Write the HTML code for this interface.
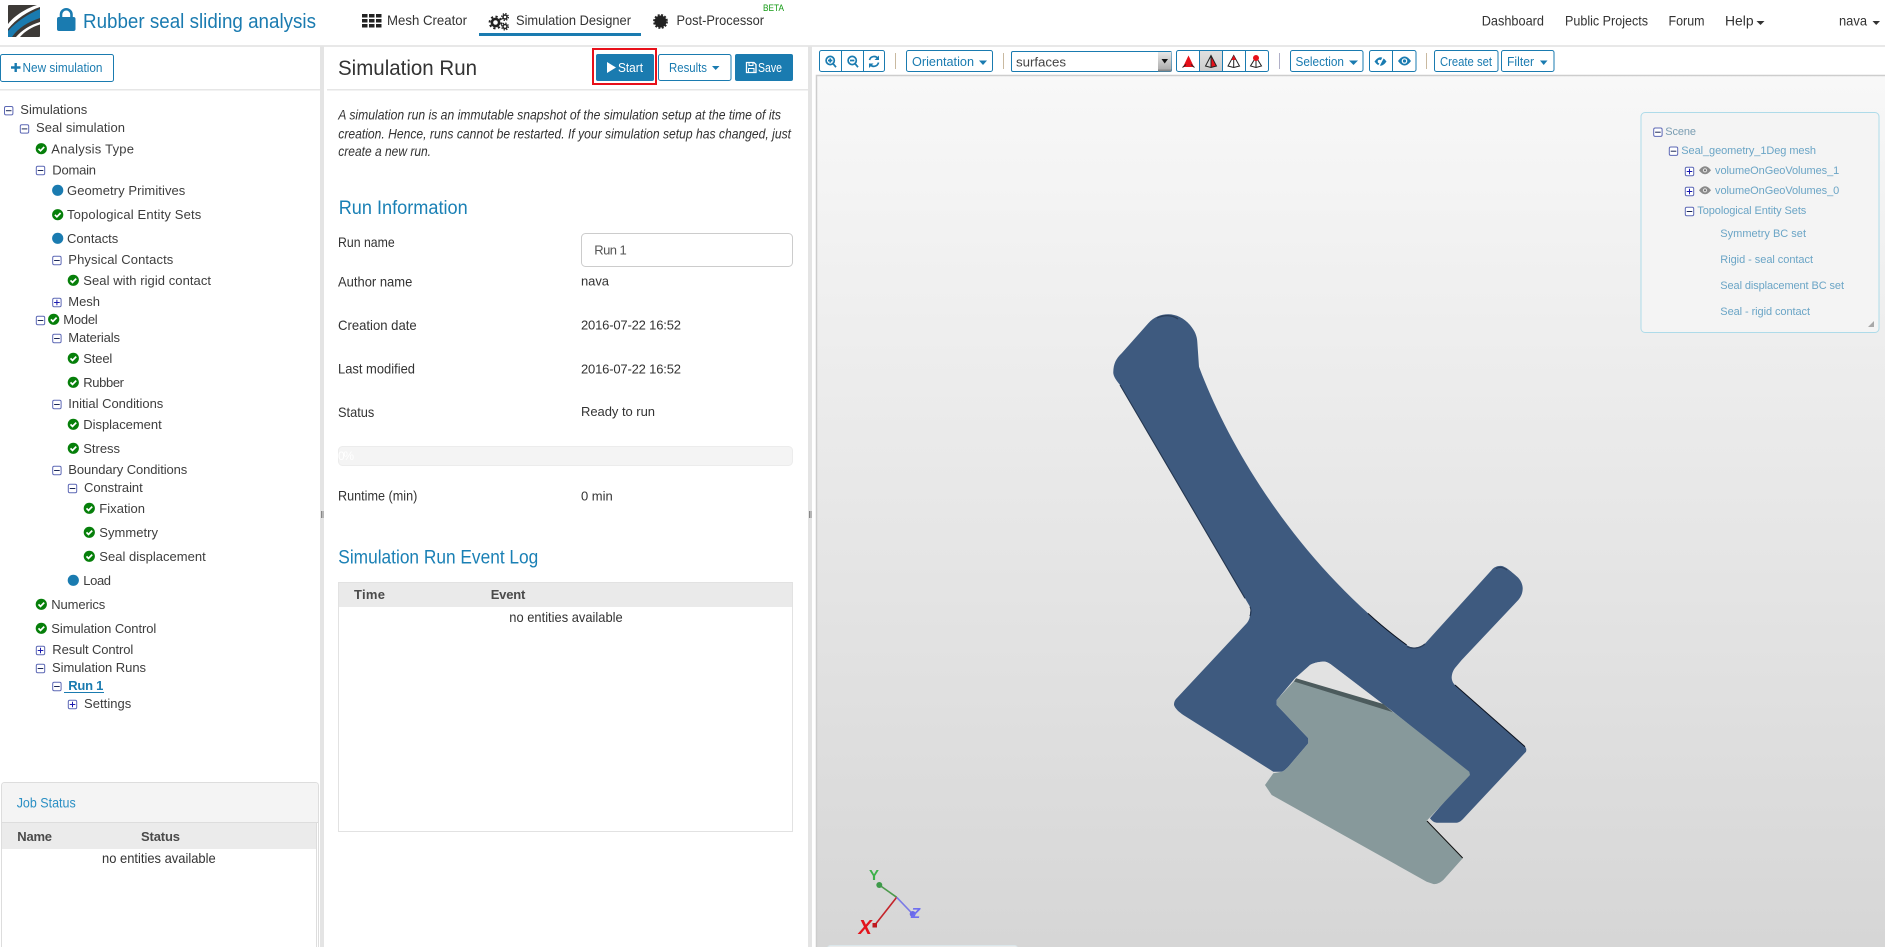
<!DOCTYPE html>
<html lang="en">
<head>
<meta charset="utf-8">
<title>Rubber seal sliding analysis</title>
<style>
html,body{margin:0;padding:0;background:#fff;width:1885px;height:947px;overflow:hidden}
svg{display:block}
text{font-family:"Liberation Sans",sans-serif;white-space:pre}
.t{font-size:13px;fill:#3d3d3d}
.l{font-size:14px;fill:#333}
.n{font-size:14px;fill:#333}
.b{font-size:12.5px;fill:#1a7bb0}
.w{font-size:12.5px;fill:#fff}
.h{font-size:19px;fill:#1a80b5}
.th{font-size:13px;font-weight:bold;fill:#4a4a4a}
.v{font-size:13px;fill:#333}
.s{font-size:11px;fill:#6ba5c6}
.btn{fill:#fff;stroke:#1a7bb0;stroke-width:1}
.div{stroke:#c9b9a0;stroke-width:1}
</style>
</head>
<body>
<svg width="1885" height="947" viewBox="0 0 1885 947" xmlns="http://www.w3.org/2000/svg">
<defs>
<linearGradient id="bg" x1="0" y1="0" x2="0" y2="1"><stop offset="0" stop-color="#f8f8f8"/><stop offset="1" stop-color="#d6d6d6"/></linearGradient>
<linearGradient id="dd" x1="0" y1="0" x2="0" y2="1"><stop offset="0" stop-color="#e8e8e8"/><stop offset="1" stop-color="#a8a8a8"/></linearGradient>
<linearGradient id="sel" x1="0" y1="0" x2="0" y2="1"><stop offset="0" stop-color="#e0e0e0"/><stop offset="1" stop-color="#cdcdcd"/></linearGradient>
<g id="mi"><rect x="-4" y="-4" width="8.4" height="8.4" rx="1.5" fill="#fff" stroke="#5d68b5"/><path d="M-2.6 0.2H3" stroke="#1c2858" stroke-width="1"/></g>
<g id="pl"><rect x="-4" y="-4" width="8.4" height="8.4" rx="1.5" fill="#fff" stroke="#5d68b5"/><path d="M-2.6 0.2H3M0.2 -2.6V3" stroke="#1b1bb0" stroke-width="1"/></g>
<g id="ck"><circle r="5.6" fill="#067f0a"/><path d="M-2.8 0.1L-0.8 2.1L2.9 -1.7" fill="none" stroke="#fff" stroke-width="1.7"/></g>
<circle id="dt" r="5.6" fill="#1a7bb0"/>
<g id="ey"><path d="M-6 0Q0 -8 6 0Q0 8 -6 0Z" fill="#8a8a8a"/><circle r="2.1" fill="#e6e6e6"/><circle r="1.1" fill="#6e6e6e"/></g>
</defs>

<!-- page chrome -->
<rect x="0" y="45" width="1885" height="2" fill="#e8e8e8"/>
<rect x="320" y="46" width="4" height="901" fill="#e4e4e4"/>
<rect x="808" y="46" width="4" height="901" fill="#e4e4e4"/>
<path d="M321.5 511V518M323 511V518M809.5 511V518M811 511V518" stroke="#888" stroke-width="1"/>
<rect x="0" y="89" width="320" height="1.5" fill="#e6e6e6"/>
<rect x="327" y="89" width="481" height="1.5" fill="#e6e6e6"/>

<!-- logo -->
<rect x="8" y="5" width="32" height="32" rx="1" fill="#3d3a37"/>
<path d="M8 24C15 15 27 8 37 5H40V7C28 11 16 19 8 29Z" fill="#fff"/>
<path d="M8 31C16 22 28 14 40 9V18C28 22 18 28 12 37H8Z" fill="#1a7bb0"/>
<path d="M16 37C22 30 30 25 40 22V24.5C32 27 25 31 20 37Z" fill="#fff"/>

<!-- lock & title -->
<path d="M61 18V14.5A5.2 5.2 0 0 1 71.5 14.5V18" fill="none" stroke="#1a7bb0" stroke-width="2.6"/>
<rect x="57" y="17" width="18.5" height="14" rx="2" fill="#1a7bb0"/>
<text x="83" y="28" textLength="233" lengthAdjust="spacingAndGlyphs" style="font-size:20px;fill:#1a7bb0">Rubber seal sliding analysis</text>

<!-- main nav -->
<g fill="#222">
<rect x="362" y="14" width="5.5" height="3.5"/><rect x="369" y="14" width="5.5" height="3.5"/><rect x="376" y="14" width="5.5" height="3.5"/>
<rect x="362" y="19" width="5.5" height="3.5"/><rect x="369" y="19" width="5.5" height="3.5"/><rect x="376" y="19" width="5.5" height="3.5"/>
<rect x="362" y="24" width="5.5" height="3.5"/><rect x="369" y="24" width="5.5" height="3.5"/><rect x="376" y="24" width="5.5" height="3.5"/>
</g>
<text class="n" x="387" y="25" textLength="80" lengthAdjust="spacingAndGlyphs">Mesh Creator</text>
<g fill="none" stroke="#222">
<circle cx="495.5" cy="22.5" r="3.6" stroke-width="2.6"/><circle cx="495.5" cy="22.5" r="5.9" stroke-width="2" stroke-dasharray="2.2 2.4"/>
<circle cx="505" cy="17" r="2" stroke-width="1.5"/><circle cx="505" cy="17" r="3.4" stroke-width="1.2" stroke-dasharray="1.4 1.3"/>
<circle cx="505" cy="26.5" r="2" stroke-width="1.5"/><circle cx="505" cy="26.5" r="3.4" stroke-width="1.2" stroke-dasharray="1.4 1.3"/>
</g>
<text class="n" x="516" y="25" textLength="115" lengthAdjust="spacingAndGlyphs">Simulation Designer</text>
<rect x="479" y="33" width="162" height="3" fill="#1a7bb0"/>
<circle cx="660.5" cy="21.5" r="6" fill="#222"/><circle cx="660.5" cy="21.5" r="6.6" fill="none" stroke="#222" stroke-width="1.6" stroke-dasharray="2 1.5"/>
<text class="n" x="676.5" y="25" textLength="87.5" lengthAdjust="spacingAndGlyphs">Post-Processor</text>
<text x="763" y="11" textLength="21" lengthAdjust="spacingAndGlyphs" style="font-size:9px;fill:#139a13">BETA</text>

<!-- right nav -->
<text class="n" x="1481.7" y="25.5" textLength="62.3" lengthAdjust="spacingAndGlyphs">Dashboard</text>
<text class="n" x="1565" y="25.5" textLength="83" lengthAdjust="spacingAndGlyphs">Public Projects</text>
<text class="n" x="1668.5" y="25.5" textLength="36" lengthAdjust="spacingAndGlyphs">Forum</text>
<text class="n" x="1725" y="25.5" textLength="28.6" lengthAdjust="spacingAndGlyphs">Help</text>
<path d="M1756.5 21H1764.5L1760.5 25Z" fill="#333"/>
<text class="n" x="1839" y="25.5" textLength="28" lengthAdjust="spacingAndGlyphs">nava</text>
<path d="M1872.5 21H1880L1876.2 25Z" fill="#333"/>

<!-- left panel -->
<rect class="btn" x="0.5" y="54.5" width="113" height="27" rx="2"/>
<path d="M11 67.5H20.5M15.7 63V72" stroke="#1a7bb0" stroke-width="2.4"/>
<text class="b" x="22.5" y="72" textLength="80" lengthAdjust="spacingAndGlyphs">New simulation</text>

<!-- tree -->
<use href="#mi" x="8.5" y="110.5"/><text class="t" x="20.3" y="114" textLength="67">Simulations</text>
<use href="#mi" x="24.3" y="128.7"/><text class="t" x="36" y="132" textLength="89">Seal simulation</text>
<use href="#ck" x="41.3" y="148.7"/><text class="t" x="51.3" y="153.3" textLength="82.7">Analysis Type</text>
<use href="#mi" x="40.3" y="170.3"/><text class="t" x="52.3" y="174.3" textLength="43.7">Domain</text>
<use href="#dt" x="57.7" y="190.3"/><text class="t" x="67" y="195" textLength="118.3">Geometry Primitives</text>
<use href="#ck" x="57.7" y="214.7"/><text class="t" x="67" y="219" textLength="134.3">Topological Entity Sets</text>
<use href="#dt" x="57.7" y="238.3"/><text class="t" x="67" y="243" textLength="51.3">Contacts</text>
<use href="#mi" x="56.7" y="260.3"/><text class="t" x="68.3" y="264" textLength="105">Physical Contacts</text>
<use href="#ck" x="73.3" y="280.3"/><text class="t" x="83.3" y="285" textLength="127.7">Seal with rigid contact</text>
<use href="#pl" x="56.7" y="302.3"/><text class="t" x="68.3" y="306" textLength="31.7">Mesh</text>
<use href="#mi" x="40.3" y="320.3"/><use href="#ck" x="53.7" y="319.3"/><text class="t" x="63.3" y="324" textLength="34.4">Model</text>
<use href="#mi" x="56.7" y="338.3"/><text class="t" x="68.3" y="342" textLength="51.7">Materials</text>
<use href="#ck" x="73.3" y="358.3"/><text class="t" x="83.3" y="363" textLength="29">Steel</text>
<use href="#ck" x="73.3" y="382.3"/><text class="t" x="83.3" y="387" textLength="40.7">Rubber</text>
<use href="#mi" x="56.7" y="404.3"/><text class="t" x="68.3" y="408" textLength="95">Initial Conditions</text>
<use href="#ck" x="73.3" y="424.3"/><text class="t" x="83.3" y="429" textLength="78.4">Displacement</text>
<use href="#ck" x="73.3" y="448.3"/><text class="t" x="83.3" y="453" textLength="36.7">Stress</text>
<use href="#mi" x="56.7" y="470.3"/><text class="t" x="68.3" y="474" textLength="119">Boundary Conditions</text>
<use href="#mi" x="72.3" y="488.3"/><text class="t" x="84" y="492" textLength="58.7">Constraint</text>
<use href="#ck" x="89.3" y="508.3"/><text class="t" x="99.3" y="513" textLength="45.7">Fixation</text>
<use href="#ck" x="89.3" y="532.3"/><text class="t" x="99.3" y="537" textLength="58.7">Symmetry</text>
<use href="#ck" x="89.3" y="556.3"/><text class="t" x="99.3" y="561" textLength="106.4">Seal displacement</text>
<use href="#dt" x="73.3" y="580.3"/><text class="t" x="83.3" y="585" textLength="27.7">Load</text>
<use href="#ck" x="41.3" y="604.3"/><text class="t" x="51.3" y="609" textLength="54">Numerics</text>
<use href="#ck" x="41.3" y="628.3"/><text class="t" x="51.3" y="633" textLength="105">Simulation Control</text>
<use href="#pl" x="40.3" y="650.3"/><text class="t" x="52.3" y="654" textLength="81">Result Control</text>
<use href="#mi" x="40.3" y="668.3"/><text class="t" x="52" y="672" textLength="94">Simulation Runs</text>
<use href="#mi" x="56.7" y="686.3"/><text x="68.3" y="690" textLength="35" style="font-size:13px;font-weight:bold;fill:#1a7bb0">Run 1</text>
<rect x="64" y="692" width="40" height="1" fill="#1a7bb0"/>
<use href="#pl" x="72.3" y="704.3"/><text class="t" x="84" y="708" textLength="47.3">Settings</text>

<!-- job status -->
<rect x="1.5" y="782.5" width="317" height="170" rx="3" fill="#fff" stroke="#ddd"/>
<path d="M2 822V785.5A3 3 0 0 1 5 783H315A3 3 0 0 1 318 785.5V822Z" fill="#f4f4f4"/>
<rect x="1" y="822" width="318" height="1" fill="#ddd"/>
<text x="16.7" y="807.7" textLength="59" lengthAdjust="spacingAndGlyphs" style="font-size:14px;fill:#2a8fc4">Job Status</text>
<rect x="2" y="823" width="314" height="26" fill="#ebebeb"/>
<rect x="316" y="823" width="1" height="124" fill="#ddd"/>
<text class="th" x="17.3" y="841" textLength="34.7">Name</text>
<text class="th" x="141" y="841" textLength="39">Status</text>
<text class="l" x="102" y="863" textLength="113.7" lengthAdjust="spacingAndGlyphs">no entities available</text>

<!-- center panel -->
<text x="338" y="75" textLength="139" lengthAdjust="spacingAndGlyphs" style="font-size:21px;fill:#333">Simulation Run</text>
<rect x="593" y="49" width="63" height="35" fill="none" stroke="#e8101a" stroke-width="2"/>
<rect x="596" y="54" width="58" height="27" rx="2" fill="#1a7bb0"/>
<path d="M607 62L616 67.5L607 73Z" fill="#fff"/>
<text class="w" x="618" y="72" textLength="25" lengthAdjust="spacingAndGlyphs">Start</text>
<rect class="btn" x="658.5" y="54.5" width="72.5" height="26" rx="2"/>
<text class="b" x="669" y="72" textLength="38" lengthAdjust="spacingAndGlyphs">Results</text>
<path d="M712 66H719.5L715.7 70Z" fill="#1a7bb0"/>
<rect x="735" y="54" width="58" height="27" rx="2" fill="#1a7bb0"/>
<path d="M746.5 62.5H754L756 64.5V72.5H746.5Z" fill="none" stroke="#fff" stroke-width="1.3"/><path d="M749 62.5V65.5H753V62.5M748.5 72V68.5H754V72" fill="none" stroke="#fff"/>
<text class="w" x="758" y="72" textLength="24" lengthAdjust="spacingAndGlyphs">Save</text>

<g style="font-size:14px;font-style:italic;fill:#333">
<text x="338.3" y="119.3" textLength="442.7" lengthAdjust="spacingAndGlyphs">A simulation run is an immutable snapshot of the simulation setup at the time of its</text>
<text x="338.3" y="138.3" textLength="452.7" lengthAdjust="spacingAndGlyphs">creation. Hence, runs cannot be restarted. If your simulation setup has changed, just</text>
<text x="338.3" y="156" textLength="92.7" lengthAdjust="spacingAndGlyphs">create a new run.</text>
</g>

<text class="h" x="338.7" y="214" textLength="129" lengthAdjust="spacingAndGlyphs">Run Information</text>

<text class="l" x="338" y="247" textLength="56.7" lengthAdjust="spacingAndGlyphs">Run name</text>
<rect x="581.5" y="233.5" width="211" height="33" rx="4" fill="#fff" stroke="#ccc"/>
<text x="594.3" y="254.3" textLength="32.4" style="font-size:13px;fill:#555">Run 1</text>
<text class="l" x="338" y="286.3" textLength="74.3" lengthAdjust="spacingAndGlyphs">Author name</text>
<text class="v" x="581" y="285.3" textLength="28">nava</text>
<text class="l" x="338" y="330" textLength="78.7" lengthAdjust="spacingAndGlyphs">Creation date</text>
<text class="v" x="581" y="329.3" textLength="100">2016-07-22 16:52</text>
<text class="l" x="338" y="373.3" textLength="77" lengthAdjust="spacingAndGlyphs">Last modified</text>
<text class="v" x="581" y="373.3" textLength="100">2016-07-22 16:52</text>
<text class="l" x="338" y="417" textLength="36.3" lengthAdjust="spacingAndGlyphs">Status</text>
<text class="v" x="581" y="416" textLength="74">Ready to run</text>
<rect x="338.5" y="446.5" width="454" height="19" rx="4" fill="#f4f4f4" stroke="#ececec"/>
<text x="338" y="460" textLength="16" style="font-size:12px;fill:#fff">0%</text>
<text class="l" x="338" y="500.3" textLength="79.3" lengthAdjust="spacingAndGlyphs">Runtime (min)</text>
<text class="v" x="581" y="500.3" textLength="31.7">0 min</text>

<text class="h" x="338.3" y="563.3" textLength="200" lengthAdjust="spacingAndGlyphs">Simulation Run Event Log</text>
<rect x="338.5" y="582.5" width="454" height="249" fill="#fff" stroke="#e2e2e2"/>
<rect x="339" y="583" width="453" height="24" fill="#eaeaea"/>
<text class="th" x="354" y="599" textLength="31">Time</text>
<text class="th" x="490.7" y="599" textLength="34.6">Event</text>
<text class="l" x="509.3" y="622" textLength="113.4" lengthAdjust="spacingAndGlyphs">no entities available</text>

<!-- toolbar -->
<rect class="btn" x="819.5" y="50.5" width="65" height="21" rx="2"/>
<path d="M841.5 50.5V71.5M863.5 50.5V71.5" stroke="#1a7bb0"/>
<g fill="none" stroke="#1a7bb0" stroke-width="1.7">
<circle cx="830.2" cy="60.5" r="4.1"/><path d="M833.2 63.8L836 67.2M828 60.5H832.4M830.2 58.4V62.6"/>
<circle cx="852.2" cy="60.5" r="4.1"/><path d="M855.2 63.8L858 67.2M850 60.5H854.4"/>
<path d="M869.5 60A4.8 4.8 0 0 1 878 58.5M878.5 62.5A4.8 4.8 0 0 1 870 64.5"/>
</g>
<path d="M879 55.5V60H874.5ZM869 68V63.5H873.5Z" fill="#1a7bb0"/>
<path class="div" d="M895.5 53V69" />
<rect class="btn" x="906.5" y="50.5" width="86" height="21" rx="2"/>
<text class="b" x="912" y="66" textLength="62" lengthAdjust="spacingAndGlyphs">Orientation</text>
<path d="M979 60.5H987L983 65Z" fill="#1a7bb0"/>
<path class="div" d="M1003.5 53V69"/>
<rect class="btn" x="1011.5" y="51.5" width="160" height="20" rx="1.5"/>
<rect x="1158" y="52" width="13.5" height="19" fill="url(#dd)"/>
<rect x="1158" y="69.5" width="13.5" height="2" fill="#888"/>
<path d="M1161.5 59H1168L1164.7 63.5Z" fill="#111"/>
<text x="1016" y="66.7" textLength="50" style="font-size:13.3px;fill:#444">surfaces</text>

<rect class="btn" x="1176.5" y="50.5" width="92" height="21" rx="2"/>
<rect x="1199" y="51" width="23" height="20" fill="url(#sel)"/>
<path d="M1199.5 50.5V71.5M1222.5 50.5V71.5M1245.5 50.5V71.5" stroke="#1a7bb0"/>
<!-- filled -->
<path d="M1188.5 55.5L1194 67H1183Z" fill="#e6101a"/><path d="M1182.5 67.5L1186 64.5M1194.5 67.5L1191 64.5" stroke="#222"/>
<!-- half wire -->
<path d="M1211 55.5L1216.5 66L1211 67.5Z" fill="#e6101a"/><path d="M1211 55.5L1216.5 66L1211 67.5L1205.5 66ZM1211 55.5V67.5" fill="none" stroke="#222"/>
<!-- wire -->
<path d="M1233.7 55.5L1239.5 66L1233.7 67.5L1228 66ZM1233.7 55.5V67.5" fill="#fff" stroke="#222"/><path d="M1233.7 55.5L1236 60L1231.5 60Z" fill="#e6101a"/>
<!-- points -->
<path d="M1256 57L1261.5 66L1256 67.5L1250.5 66ZM1256 57V67.5" fill="#fff" stroke="#222"/><circle cx="1256" cy="58" r="3" fill="#e6101a"/>
<path d="M1279.5 53V69" stroke="#b0b0c8"/>

<rect class="btn" x="1290.5" y="50.5" width="72.5" height="21" rx="2"/>
<text class="b" x="1295.5" y="66" textLength="48.5" lengthAdjust="spacingAndGlyphs">Selection</text>
<path d="M1349 60.5H1358L1353.5 65Z" fill="#1a7bb0"/>
<rect class="btn" x="1369.5" y="50.5" width="46.5" height="21" rx="2"/>
<path d="M1392.5 50.5V71.5" stroke="#1a7bb0"/>
<path d="M1374.5 61.5Q1380.5 53 1386.5 61.5Q1380.5 70 1374.5 61.5Z" fill="#1a7bb0"/><circle cx="1379.5" cy="61.5" r="1.8" fill="#fff"/><path d="M1384 56L1378 67.5" stroke="#fff" stroke-width="1.6"/>
<path d="M1398 61Q1404.5 52 1411 61Q1404.5 70 1398 61Z" fill="#1a7bb0"/><circle cx="1404.5" cy="61" r="2.8" fill="#fff"/><circle cx="1404.5" cy="61" r="1.6" fill="#1a7bb0"/>
<path class="div" d="M1426.5 53V69"/>
<rect class="btn" x="1434.5" y="50.5" width="63.5" height="21" rx="2"/>
<text class="b" x="1440" y="66" textLength="52" lengthAdjust="spacingAndGlyphs">Create set</text>
<rect class="btn" x="1501.5" y="50.5" width="52.5" height="21" rx="2"/>
<text class="b" x="1507" y="66" textLength="27" lengthAdjust="spacingAndGlyphs">Filter</text>
<path d="M1540 60.5H1547.5L1543.7 65Z" fill="#1a7bb0"/>

<!-- viewer -->
<rect x="816" y="75" width="1069" height="872" fill="url(#bg)"/>
<path d="M816.5 947V75.5H1885" fill="none" stroke="#cdcdcd" stroke-width="1.5"/>

<!-- seal geometry -->
<path fill="#3e5a7f" d="M1148.3 323.3C1154 317 1161 314.3 1168.3 314.3C1176 314.3 1184 318 1190 325C1195 331 1197 336 1197.3 342L1199 366.7C1230 450 1300 565 1406.7 645C1411 648 1414 648 1417 647.3C1421 646.5 1424 645 1426.7 641.7L1491.7 570C1494 567 1498 565.5 1501.7 566C1506 566.5 1514 574 1518 577.5C1521 580.5 1522.7 585 1522.7 588.3C1522.7 593 1521 597 1518.3 600L1461.7 660L1455 668C1452 672 1451.7 676 1451.7 678C1452 681 1453 683 1455 685L1525 746.7C1526.5 748.5 1526.5 750 1526 751.7L1466.7 815C1463 819 1460 822.7 1456.7 822.7L1436.7 822.7C1434 822.7 1431 820 1430 818.3L1469.3 773.3L1395 713.3L1331.7 665C1328 662 1325 661.3 1321.7 661.7C1318 662 1313 663 1310 665L1295 678.3L1276.7 700V705L1308.3 738.3V743.3L1288.3 766.7C1286 769 1284 771 1281.7 771.7H1273.3L1183.3 715C1179 712 1175 708.5 1174 705C1174 702 1175 700 1176.7 698.3L1246.7 623.3C1249.5 620 1250.2 616 1250 613.3C1250 610 1252 610 1250 606.7L1245 598.3L1120 385C1115 379 1113 375 1113.3 371.7C1113.5 364 1116 358.5 1121.7 353.3Z"/>
<path fill="none" stroke="#24364f" stroke-width="1.1" d="M1120 385L1245 598.3M1250 606.7C1251.5 610 1250.8 614 1250 616"/>
<path fill="none" stroke="#0c1320" stroke-width="1" d="M1368 613.4C1380 624.5 1393 635 1406.7 645"/>
<path fill="none" stroke="#0c1320" stroke-width="1" d="M1455 685L1525 746.7"/>
<path fill="none" stroke="#2b3e5a" stroke-width="1.3" d="M1407 646.5C1412 649 1419 649 1425 644"/>
<path fill="none" stroke="#2b3e5a" stroke-width="1.2" d="M1157 318C1165 314.5 1172 315 1178 319"/>
<path fill="none" stroke="#2b3e5a" stroke-width="1" d="M1496 568.5C1499 567 1503 567 1507 570"/>

<path fill="#e2e2e2" d="M1331.7 665L1395 713.3L1383.3 705L1296 678.3L1310 665C1313 663 1318 662 1321.7 661.7C1325 661.3 1328 662 1331.7 665Z"/>
<path fill="#87999b" d="M1295 680L1390 710L1395 713.3L1469.3 771.7L1470 775L1426.7 820.7L1462.7 858.3L1443.3 880C1440 883 1436 884.5 1433.3 884L1426.7 881.7L1271.7 795L1265 785L1273.3 773.3L1281.7 771.7C1284 771 1286 769 1288.3 766.7L1308.3 743.3V738.3L1276.7 705V700Z"/>
<path fill="#4c5b5d" d="M1296 678.3L1383.3 704L1393 712.3L1294 681.5Z"/>
<path fill="none" stroke="#111" stroke-width="1" d="M1427 821L1462.7 858"/>

<!-- axes -->
<path d="M896.7 897.3L879.3 885" stroke="#4c9a4c" stroke-width="1.6"/><circle cx="879.3" cy="885" r="3" fill="#3e9a4a"/>
<path d="M896.7 897.3L874.5 925.5" stroke="#c4242a" stroke-width="1.6"/><rect x="872.5" y="923" width="4.5" height="4.5" fill="#c01a20"/>
<path d="M896.7 897.3L912.7 914" stroke="#7a7ae6" stroke-width="1.6"/><circle cx="912.7" cy="914" r="3" fill="#6a6ae8"/>
<text x="869" y="880" style="font-size:15px;font-weight:bold;fill:#3cb14a">Y</text>
<text x="858.5" y="934" style="font-size:20px;font-weight:bold;font-style:italic;fill:#e3141c">X</text>
<text x="911" y="918" style="font-size:15px;font-weight:bold;font-style:italic;fill:#6f6ff0">Z</text>
<rect x="827.5" y="945.5" width="190" height="6" rx="3" fill="#ececec" stroke="#dbe7eb"/>

<!-- scene panel -->
<rect x="1641" y="112.5" width="238" height="220" rx="4" fill="#f4f4f4" stroke="#aedbe9"/>
<use href="#mi" x="1657.7" y="132"/><text class="s" x="1665.3" y="135" textLength="30.7" style="fill:#7a9db2">Scene</text>
<use href="#mi" x="1673.3" y="151"/><text class="s" x="1681.3" y="154" textLength="134.7">Seal_geometry_1Deg mesh</text>
<use href="#pl" x="1689.3" y="171.3"/><use href="#ey" x="1705" y="170.3"/><text class="s" x="1715" y="174" textLength="124.3">volumeOnGeoVolumes_1</text>
<use href="#pl" x="1689.3" y="191.3"/><use href="#ey" x="1705" y="190.3"/><text class="s" x="1715" y="194" textLength="124.3">volumeOnGeoVolumes_0</text>
<use href="#mi" x="1689.3" y="211.3"/><text class="s" x="1697.3" y="214" textLength="109">Topological Entity Sets</text>
<text class="s" x="1720.3" y="237" textLength="85.7">Symmetry BC set</text>
<text class="s" x="1720.3" y="263" textLength="92.7">Rigid - seal contact</text>
<text class="s" x="1720.3" y="289" textLength="123.7">Seal displacement BC set</text>
<text class="s" x="1720.3" y="315" textLength="89.7">Seal - rigid contact</text>
<path d="M1874 321V327H1868Z" fill="#a8a8a8"/>
</svg>
</body>
</html>
